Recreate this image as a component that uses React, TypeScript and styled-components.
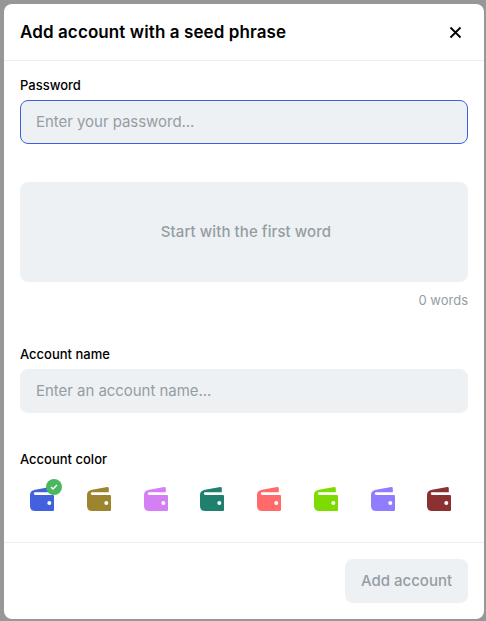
import React from "react";
import styled, { createGlobalStyle } from "styled-components";

const GlobalStyle = createGlobalStyle`
  * { box-sizing: border-box; }
  body {
    margin: 0;
    background: #979797;
    font-family: Inter, "Liberation Sans", sans-serif;
    color: #000;
  }
`;

const Backdrop = styled.div`
  height: 621px;
  padding: 4px 2px 2px 4px;
  overflow: hidden;
`;

const Modal = styled.section`
  display: flex;
  flex-direction: column;
  width: 480px;
  height: 615px;
  background: #fff;
  border-radius: 8px;
`;

const Header = styled.header`
  display: flex;
  align-items: center;
  justify-content: space-between;
  height: 57px;
  padding: 0 16px;
  border-bottom: 1px solid #edeeef;
`;

const Title = styled.h1`
  margin: 0;
  font-size: 17px;
  line-height: 24px;
  font-weight: 600;
  letter-spacing: 0.1px;
`;

const CloseButton = styled.button`
  display: flex;
  padding: 0;
  margin-right: 4px;
  border: 0;
  background: none;
`;

const Body = styled.form`
  display: flex;
  flex-direction: column;
  flex: 1;
  padding: 14px 16px 0;
`;

const Label = styled.label`
  display: block;
  height: 20px;
  margin-bottom: 5px;
  font-size: 13px;
  line-height: 20px;
  font-weight: 500;
`;

const Input = styled.input<{ $active?: boolean }>`
  width: 100%;
  height: 44px;
  padding: 0 15px 2px;
  border: 1px solid ${(p) => (p.$active ? "#3f5fe0" : "#edf1f4")};
  border-radius: 8px;
  outline: none;
  background: #edf1f4;
  font: 400 15px/20px Inter, "Liberation Sans", sans-serif;
  letter-spacing: -0.04px;
  &::placeholder { color: #959da3; opacity: 1; }
`;

const SeedBox = styled.div`
  display: flex;
  align-items: center;
  justify-content: center;
  height: 100px;
  margin-top: 38px;
  padding: 0 0 2px 4px;
  border-radius: 8px;
  background: #edf1f4;
  color: #959da3;
  font-size: 15px;
  font-weight: 500;
  letter-spacing: 0.08px;
`;

const WordCount = styled.div`
  margin: 8px 0 34px;
  text-align: right;
  color: #959da3;
  font-size: 13px;
  line-height: 20px;
`;

const ColorLabel = styled(Label)`
  margin-top: 36px;
`;

const Colors = styled.div`
  display: grid;
  grid-template-columns: repeat(8, 1fr);
  gap: 6px;
  padding-top: 13px;
`;

const Swatch = styled.button`
  position: relative;
  display: flex;
  padding: 0 0 0 10px;
  border: 0;
  background: none;
`;

const Badge = styled.span`
  position: absolute;
  left: 26px;
  top: -8px;
  display: flex;
  align-items: center;
  justify-content: center;
  width: 16px;
  height: 16px;
  border-radius: 50%;
  background: #4bb85f;
`;

const Footer = styled.footer`
  display: flex;
  justify-content: flex-end;
  height: 77px;
  padding: 16px;
  border-top: 1px solid #edeeef;
`;

const SubmitButton = styled.button`
  width: 123px;
  height: 44px;
  padding: 0;
  border: 0;
  border-radius: 8px;
  background: #edf1f4;
  color: #959da3;
  font: 500 15px/20px Inter, "Liberation Sans", sans-serif;
`;

const colors = ["#4361de", "#9d842f", "#d57ff5", "#1f806f", "#ff6b6b", "#7ddb00", "#8f7cff", "#8b3131"];

const Wallet = ({ color }: { color: string }) => (
  <svg width="24" height="24" viewBox="0 0 24 24" fill={color}>
    <path d="M5 2.7 20.3.1Q21.8 0 21.8 1.5V5.2H5.2Q3.8 5.2 3.8 6.6T5.2 8H23Q24 8 24 9V23Q24 24 23 24H5Q0 24 0 19V8Q0 3.6 5 2.7Z" />
    <circle cx="19.3" cy="16" r="2" fill="#fff" />
  </svg>
);

export default function App() {
  return (
    <>
      <GlobalStyle />
      <Backdrop>
        <Modal role="dialog" aria-labelledby="title">
          <Header>
            <Title id="title">Add account with a seed phrase</Title>
            <CloseButton aria-label="Close">
              <svg width="17" height="17" viewBox="0 0 17 17" fill="none" stroke="#000" strokeWidth="1.8">
                <path d="m3.5 3.5 10 10m0-10-10 10" />
              </svg>
            </CloseButton>
          </Header>
          <Body>
            <Label htmlFor="password">Password</Label>
            <Input id="password" type="password" placeholder="Enter your password..." $active />
            <SeedBox>Start with the first word</SeedBox>
            <WordCount>0 words</WordCount>
            <Label htmlFor="name">Account name</Label>
            <Input id="name" placeholder="Enter an account name..." />
            <ColorLabel as="div">Account color</ColorLabel>
            <Colors>
              {colors.map((color, index) => (
                <Swatch key={color} type="button" aria-label={`Color ${index + 1}`}>
                  <Wallet color={color} />
                  {index === 0 && (
                    <Badge>
                      <svg width="8" height="8" viewBox="0 0 8 8" fill="none" stroke="#fff" strokeWidth="1.4">
                        <path d="m1 4.1 2 2 4-4" />
                      </svg>
                    </Badge>
                  )}
                </Swatch>
              ))}
            </Colors>
          </Body>
          <Footer>
            <SubmitButton disabled>Add account</SubmitButton>
          </Footer>
        </Modal>
      </Backdrop>
    </>
  );
}
